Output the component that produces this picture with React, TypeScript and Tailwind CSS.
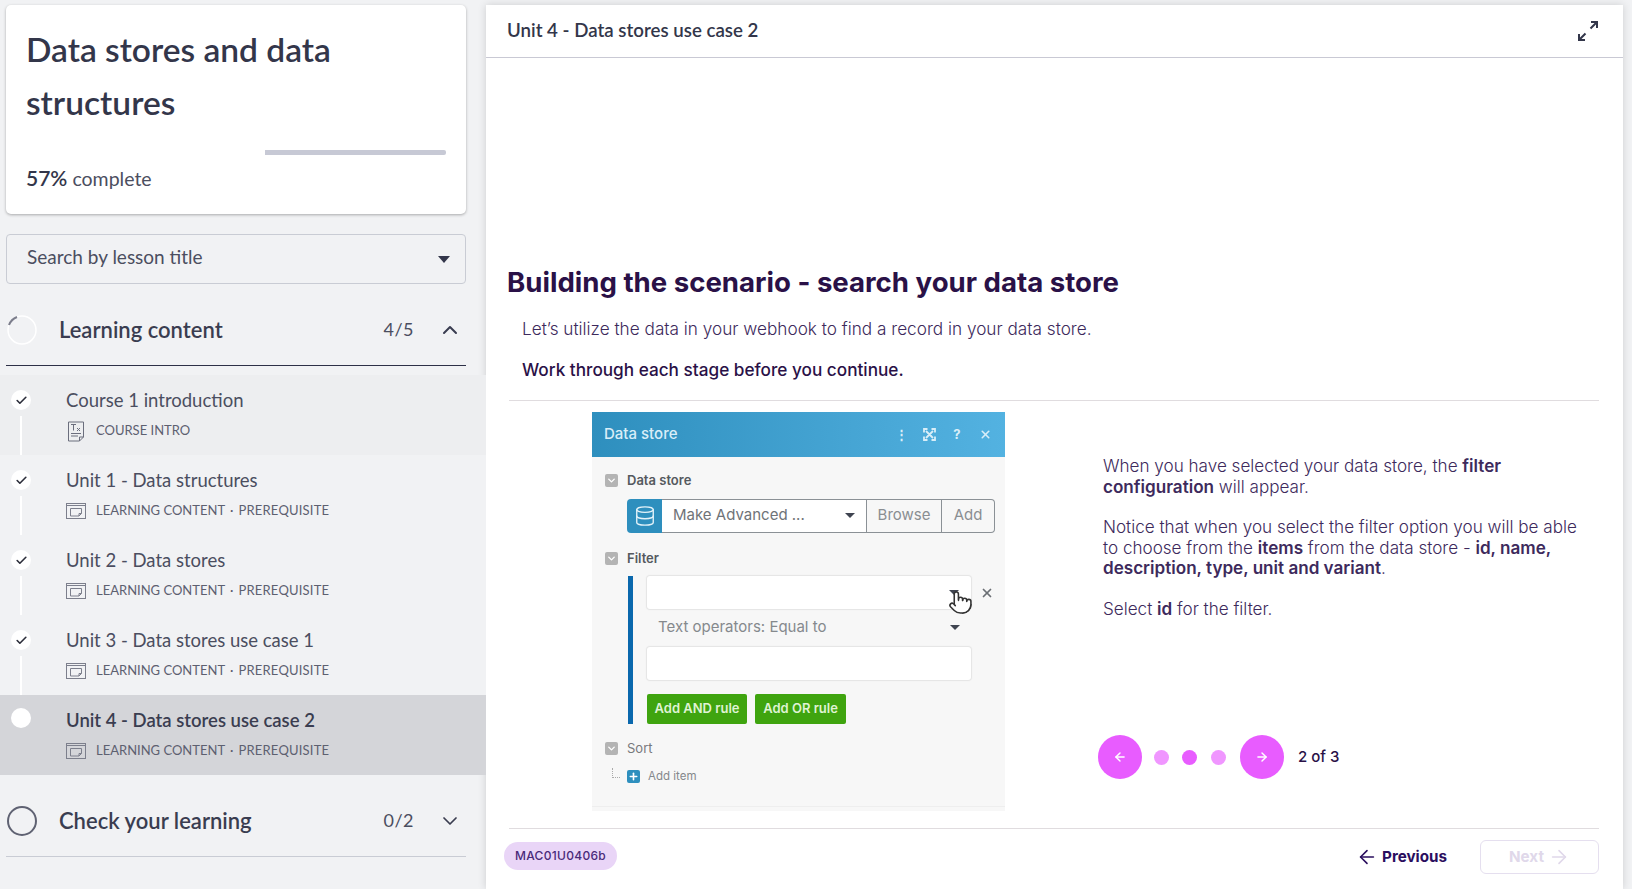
import { ArrowLeft, ArrowRight, Check, ChevronDown, ChevronUp, Database, Plus, Pointer, X } from "lucide-react";

const LESSONS = [
  { title: "Course 1 introduction", kind: "intro", meta: "COURSE INTRO", done: true },
  { title: "Unit 1 - Data structures", kind: "slides", meta: "LEARNING CONTENT", done: true },
  { title: "Unit 2 - Data stores", kind: "slides", meta: "LEARNING CONTENT", done: true },
  { title: "Unit 3 - Data stores use case 1", kind: "slides", meta: "LEARNING CONTENT", done: true },
  { title: "Unit 4 - Data stores use case 2", kind: "slides", meta: "LEARNING CONTENT", done: false },
];

function IntroIcon() {
  return (
    <svg width="18" height="21" viewBox="0 0 18 21" fill="none" stroke="#6b6e7d" strokeWidth="1" className="ml-[1px]">
      <path d="M1.5 1h15v15l-4 4h-11z" />
      <path d="M12.5 20v-4h4" />
      <path d="M4 3.5h5M6.5 3.5v6M10 7l3 3M13 7l-3 3M4 12.5h10M4 15h7" />
    </svg>
  );
}

function SlidesIcon() {
  return (
    <svg width="20" height="16" viewBox="0 0 20 16" fill="none" stroke="#7c7f8c" strokeWidth="1">
      <rect x="0.5" y="0.5" width="19" height="15" />
      <path d="M0.5 2.5h19" />
      <path d="M4.5 5.5h11v5l-2.5 2.5h-8.5z" />
      <path d="M13 13v-2.5h2.5" />
    </svg>
  );
}

function SectionHeader({ title, count, open }: { title: string; count: string; open: boolean }) {
  return (
    <div className="flex h-[60px] items-center">
      {open ? (
        <svg width="30" height="30" viewBox="0 0 30 30" className="ml-[1px]" fill="none">
          <circle cx="15" cy="15" r="14" stroke="#ffffff" strokeWidth="1.5" />
          <path d="M2 10A14 14 0 0 1 10 2" stroke="#7b7d8b" strokeWidth="2" />
        </svg>
      ) : (
        <svg width="30" height="30" viewBox="0 0 30 30" className="ml-[1px]" fill="none">
          <circle cx="15" cy="15" r="14" stroke="#5f6272" strokeWidth="2" />
        </svg>
      )}
      <span className="mb-[2px] ml-[22px] flex-1 text-[22px] font-semibold text-[#3a3d50]">{title}</span>
      <span className="mb-[2px] text-[18px] tracking-[0.5px] text-[#4b4e60]">{count}</span>
      <span className="ml-[24px] mr-[4px] text-[#3a3d50]">
        {open ? <ChevronUp size={24} strokeWidth={2} /> : <ChevronDown size={24} strokeWidth={1.75} />}
      </span>
    </div>
  );
}

function LessonRow({ lesson, index }: { lesson: (typeof LESSONS)[number]; index: number }) {
  const active = !lesson.done;
  const bg = active ? "bg-[#d4d5d9]" : index === 0 ? "bg-[#edeef0]" : "bg-[#f1f2f4]";
  return (
    <div className={`relative flex h-[80px] ${bg}`}>
      {/* Connector to the next lesson */}
      {index < LESSONS.length - 1 && (
        <div className="absolute left-[20px] top-[41px] h-[48px] w-[2px] bg-white" aria-hidden="true" />
      )}
      <div className="flex w-[66px] shrink-0 pl-[11px]">
        <span className={`flex h-[20px] w-[20px] items-center justify-center rounded-full bg-white ${active ? "mt-[13px]" : "mt-[15px]"}`}>
          {lesson.done && <Check size={13} strokeWidth={3} className="text-[#2b2d3a]" />}
        </span>
      </div>
      <div className="pt-[11px]">
        <div className={`text-[18.5px] leading-[28px] ${active ? "font-semibold text-[#3a3d50]" : "text-[#4b4e60]"}`}>
          {lesson.title}
        </div>
        <div className="mt-[7px] flex h-[20px] items-center text-[13px] text-[#5d6070]">
          <span className="flex w-[30px]">{lesson.kind === "intro" ? <IntroIcon /> : <SlidesIcon />}</span>
          <span>{lesson.meta}</span>
          {lesson.kind !== "intro" && <span className="ml-[5px]">·</span>}
          {lesson.kind !== "intro" && <span className="ml-[5px] tracking-[0.2px]">PREREQUISITE</span>}
        </div>
      </div>
    </div>
  );
}

function Sidebar() {
  return (
    <aside className="flex w-[486px] shrink-0 flex-col pt-[5px] font-['Lato','Noto_Sans',sans-serif]">
      <div className="px-[6px] pr-[20px]">
        <div className="h-[209px] rounded-[5px] bg-white px-[20px] pt-[18px] shadow-[0_1px_3px_rgba(0,0,0,0.3)]">
          <h1 className="text-[33.5px] font-semibold leading-[53px] text-[#33364a]">Data stores and data structures</h1>
          <div className="mt-[21px] flex h-[5px] justify-end">
            <div className="h-[5px] w-[181px] rounded-r-[2px] bg-[#c7c9d5]" />
          </div>
          <div className="mt-[7px] text-[19.5px] text-[#4b4e60]">
            <span className="text-[21px] font-semibold text-[#33364a]">57%</span> complete
          </div>
        </div>
        <div className="mt-[20px] flex h-[50px] items-center justify-between rounded-[4px] border border-[#c9ccd4] pl-[20px] pr-[15px] text-[19px] text-[#4b4e60]">
          <span className="mb-[3px]">Search by lesson title</span>
          <span className="h-0 w-0 border-x-[6px] border-t-[7px] border-x-transparent border-t-[#33364a]" />
        </div>
        <div className="mt-[16px] border-b border-[#2d3047] pb-[5px]">
          <SectionHeader title="Learning content" count="4/5" open />
        </div>
      </div>
      <div className="mt-[9px]">
        {LESSONS.map((lesson, i) => (
          <LessonRow key={lesson.title} lesson={lesson} index={i} />
        ))}
      </div>
      <div className="mt-[16px] px-[6px] pr-[20px]">
        <div className="border-b border-[#c9ccd4] pb-[5px]">
          <SectionHeader title="Check your learning" count="0/2" open={false} />
        </div>
      </div>
    </aside>
  );
}

function Caret({ className }: { className: string }) {
  return <span className={`h-0 w-0 border-x-[5px] border-t-[5px] border-x-transparent border-t-[#3f4450] ${className}`} />;
}

function SectionMark() {
  return (
    <span className="flex h-[13px] w-[13px] items-center justify-center rounded-[2px] bg-[#b4b4b4] text-white">
      <ChevronDown size={11} strokeWidth={3} />
    </span>
  );
}

function DataStoreShot() {
  return (
    <div className="h-[399px] w-[413px] shrink-0 bg-[#f7f7f7] font-['Inter',sans-serif] text-[#6f7378]">
      <div className="flex h-[45px] items-center justify-between bg-gradient-to-r from-[#2e8fbe] to-[#53b2e1] pl-[12px] pr-[13px] text-[#d9eef8]">
        <span className="text-[15px] font-medium">Data store</span>
        <div className="flex items-center gap-[14px] text-[13px] font-bold">
          <span className="flex w-[14px] justify-center">⋮</span>
          <span className="flex w-[14px] justify-center">
            <svg width="13" height="13" viewBox="0 0 13 13" fill="none" stroke="currentColor" strokeWidth="1.8">
              <path d="M1 4.5V1h3.5M8.5 1H12v3.5M12 8.5V12H8.5M4.5 12H1V8.5M3 3l7 7M10 3l-7 7" />
            </svg>
          </span>
          <span className="flex w-[14px] justify-center">?</span>
          <span className="flex w-[14px] justify-center">
            <X size={13} strokeWidth={3} />
          </span>
        </div>
      </div>
      <div className="pl-[13px] pt-[14px]">
        <div className="flex items-center gap-[9px] text-[13px] font-semibold text-[#55595e]">
          <SectionMark />
          Data store
        </div>
        <div className="ml-[22px] mt-[8px] flex h-[34px] w-[368px] text-[15px]">
          <span className="flex w-[35px] items-center justify-center rounded-l-[4px] bg-[#2e8fbe] text-[#e3f2f9]">
            <Database size={22} strokeWidth={1.5} />
          </span>
          <span className="flex w-[204px] items-center justify-between border-y border-[#8b9196] bg-white pl-[11px] pr-[11px]">
            Make Advanced ...
            <Caret className="" />
          </span>
          <span className="flex w-[76px] items-center justify-center border border-[#8b9196] text-[#8a8e92]">Browse</span>
          <span className="flex w-[53px] items-center justify-center rounded-r-[4px] border border-l-0 border-[#8b9196] text-[#8a8e92]">Add</span>
        </div>
        <div className="mt-[16px] flex items-center gap-[9px] text-[13px] font-semibold text-[#55595e]">
          <SectionMark />
          Filter
        </div>
        <div className="ml-[23px] mt-[8px] h-[148px] w-[368px] border-l-[5px] border-[#0a68ad] pl-[14px]">
          <div className="relative flex items-center">
            <div className="flex h-[33px] w-[324px] items-center justify-end rounded-[3px] bg-white pr-[12px] shadow-[0_0_1px_1px_#e4e4e4]">
              <Caret className="" />
            </div>
            <X size={14} strokeWidth={3} className="ml-[9px] text-[#6b6f74]" />
            {/* Mouse pointer over the dropdown */}
            <Pointer size={25} strokeWidth={1.5} className="absolute left-[301px] top-[14px] fill-white text-[#333]" />
          </div>
          <div className="flex h-[38px] w-[324px] items-center justify-between pb-[2px] pl-[11px] pr-[11px] text-[15px] text-[#85898d]">
            Text operators: Equal to
            <Caret className="" />
          </div>
          <div className="h-[33px] w-[324px] rounded-[3px] bg-white shadow-[0_0_1px_1px_#e4e4e4]" />
          <div className="mt-[14px] flex gap-[8px] text-[13px] font-semibold text-[#dff3d3]">
            <span className="flex h-[30px] w-[100px] items-center justify-center rounded-[2px] bg-[#3fa40f]">Add AND rule</span>
            <span className="flex h-[30px] w-[91px] items-center justify-center rounded-[2px] bg-[#3fa40f]">Add OR rule</span>
          </div>
        </div>
        <div className="mt-[15px] flex items-center gap-[9px] text-[13px] text-[#77797d]">
          <SectionMark />
          Sort
        </div>
        <div className="mt-[9px] flex items-center text-[11.5px] text-[#85888c]">
          <span className="mb-[8px] ml-[7px] h-[10px] w-[8px] border-b border-l border-dotted border-[#aaaaaa]" />
          <span className="ml-[7px] mr-[8px] flex h-[13px] w-[13px] items-center justify-center rounded-[2px] bg-[#2e8fbe] text-white">
            <Plus size={11} strokeWidth={3.5} />
          </span>
          Add item
        </div>
      </div>
      <div className="mt-[20px] border-t border-[#eeeeee]" />
    </div>
  );
}

function Stepper() {
  return (
    <div className="flex items-center text-[#2a1147]">
      <span className="flex h-[44px] w-[44px] items-center justify-center rounded-full bg-[#e85cff] text-white">
        <ArrowLeft size={14} strokeWidth={2.5} />
      </span>
      <span className="ml-[12px] h-[15px] w-[15px] rounded-full bg-[#f096ff]" />
      <span className="ml-[13px] h-[15px] w-[15px] rounded-full bg-[#e85cff]" />
      <span className="ml-[14px] h-[15px] w-[15px] rounded-full bg-[#f096ff]" />
      <span className="ml-[14px] flex h-[44px] w-[44px] items-center justify-center rounded-full bg-[#e85cff] text-white">
        <ArrowRight size={14} strokeWidth={2.5} />
      </span>
      <span className="ml-[14px] text-[15px] font-medium">2 of 3</span>
    </div>
  );
}

function Main() {
  return (
    <main className="mt-[5px] flex h-[884px] w-[1137px] shrink-0 flex-col bg-white font-['Inter',sans-serif] shadow-[0_0_8px_rgba(0,0,0,0.15)]">
      <header className="flex h-[53px] shrink-0 items-center justify-between border-b border-[#c9c9d4] pl-[21px] pr-[24px] font-['Lato',sans-serif] text-[18.7px] font-semibold text-[#33364a]">
        <span className="mb-[1px]">Unit 4 - Data stores use case 2</span>
        <svg width="22" height="22" viewBox="0 0 22 22" fill="none" stroke="#33364a" strokeWidth="2">
          <path d="M14 2h6v6M19.5 2.5l-6 6M2 14v6h6M2.5 19.5l6-6" />
        </svg>
      </header>
      <div className="flex-1 pl-[21px] pr-[24px]">
        <h2 className="mt-[206px] text-[27.6px] font-bold leading-[36px] text-[#2a1147]">Building the scenario - search your data store</h2>
        <p className="ml-[15px] mt-[17px] text-[17.2px] font-light leading-[24px] text-[#3d2a5c]">
          Let’s utilize the data in your webhook to find a record in your data store.
        </p>
        <p className="ml-[15px] mt-[17px] text-[17.2px] font-medium leading-[24px] text-[#2a1147]">Work through each stage before you continue.</p>
        <div className="ml-[2px] mt-[18px] flex border-t border-[#e0dcdf] pl-[83px] pt-[11px]">
          <DataStoreShot />
          <div className="ml-[98px] flex h-[399px] flex-col">
            <div className="mt-[44px] flex w-[480px] flex-col gap-[20px] text-[17.1px] font-light leading-[20.5px] text-[#3d2a5c]">
              <p>
                When you have selected your data store, the <b className="font-semibold">filter configuration</b> will appear.
              </p>
              <p>
                Notice that when you select the filter option you will be able to choose from the <b className="font-semibold">items</b> from the data store - <b className="font-semibold">id, name, description, type, unit and variant</b>.
              </p>
              <p>
                Select <b className="font-semibold">id</b> for the filter.
              </p>
            </div>
            <div className="-ml-[5px] mt-[116px]">
              <Stepper />
            </div>
          </div>
        </div>
        <div className="ml-[2px] mt-[17px] flex items-start border-t border-[#e0dcdf] pt-[11px]">
          <span className="-ml-[5px] mt-[2px] flex h-[28px] items-center rounded-full bg-[#e9d5f7] px-[11px] text-[12px] font-medium tracking-[0.3px] text-[#4a2a7a]">
            MAC01U0406b
          </span>
          <button className="ml-auto mt-[3px] flex h-[28px] items-center gap-[4px] text-[15.2px] font-bold text-[#2a0e5e]">
            <ArrowLeft size={22} strokeWidth={1.75} />
            Previous
          </button>
          <button className="ml-[33px] flex h-[34px] w-[119px] items-center justify-center gap-[4px] rounded-[6px] border border-[#e5dfef] text-[15.2px] font-bold text-[#e0d8ea]">
            Next
            <ArrowRight size={22} strokeWidth={1.75} />
          </button>
        </div>
      </div>
    </main>
  );
}

export default function App() {
  return (
    <div className="flex h-screen w-full overflow-hidden bg-[#f1f2f4]">
      <Sidebar />
      <Main />
    </div>
  );
}
